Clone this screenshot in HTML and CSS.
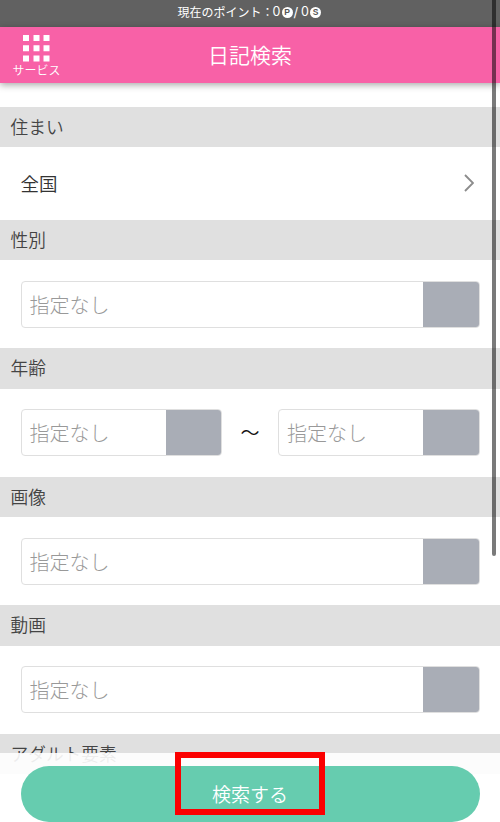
FILE: index.html
```html
<!DOCTYPE html>
<html lang="ja">
<head>
<meta charset="utf-8">
<meta name="viewport" content="width=device-width, initial-scale=1">
<title>日記検索</title>
<link rel="stylesheet" href="styles.css">
</head>
<body>
<div class="screen">
  <div class="points"><span>現在のポイント</span><span class="colon">：</span><span class="num">0</span><span class="coin">P</span><span class="slash">/</span><span class="num">0</span><span class="coin">S</span></div>
  <header class="header">
    <div class="service">
      <svg class="grid-icon" viewBox="0 0 27 27" fill="#fff"><path d="M0 0h6v6H0zM10.5 0h6v6h-6zM20.5 0h6v6h-6zM0 10.3h6v6H0zM10.5 10.3h6v6h-6zM20.5 10.3h6v6h-6zM0 20.6h6v6H0zM10.5 20.6h6v6h-6zM20.5 20.6h6v6h-6z"/></svg>
      <span class="service-label">サービス</span>
    </div>
    <h1 class="title">日記検索</h1>
  </header>
  <main class="form">
    <h2 class="heading">住まい</h2>
    <div class="link-row"><span>全国</span><svg class="chevron" viewBox="0 0 10 18" fill="none" stroke="#8c8c8c" stroke-width="1.9"><path d="M1 1l8 8-8 8"/></svg></div>
    <h2 class="heading">性別</h2>
    <div class="field-row"><div class="select"><span class="value">指定なし</span><span class="handle"></span></div></div>
    <h2 class="heading">年齢</h2>
    <div class="field-row"><div class="select"><span class="value">指定なし</span><span class="handle"></span></div><span class="tilde">〜</span><div class="select"><span class="value">指定なし</span><span class="handle"></span></div></div>
    <h2 class="heading">画像</h2>
    <div class="field-row"><div class="select"><span class="value">指定なし</span><span class="handle"></span></div></div>
    <h2 class="heading">動画</h2>
    <div class="field-row"><div class="select"><span class="value">指定なし</span><span class="handle"></span></div></div>
    <h2 class="heading">アダルト要素</h2>
  </main>
  <footer class="footer">
    <div class="submit">検索する</div>
    <div class="highlight"></div>
  </footer>
  <div class="scrollbar"></div>
</div>
</body>
</html>
```
FILE: styles.css
```css
* { box-sizing: border-box; }
body { margin: 0; font-family: "Noto Sans CJK JP", sans-serif; font-weight: 350; background: #fff; color: #444; }
.screen { position: relative; width: 500px; height: 822px; overflow: hidden; }
.points { height: 27.4px; padding: 0 0 3.4px 177.5px; display: flex; align-items: center; background: #616161; color: #fff; font-size: 12px; line-height: 20px; font-weight: 400; }
.colon { width: 11px; }
.num { width: 8px; font-family: Inter, sans-serif; font-weight: 400; font-size: 12.5px; }
.coin { width: 11px; height: 11px; margin-left: 1px; border-radius: 50%; background: #fff; color: #555; font: 700 8.5px/11px "Liberation Sans", sans-serif; text-align: center; }
.slash { width: 8.5px; padding-right: 2px; font-family: Inter, sans-serif; font-size: 13px; text-align: center; }
.header { position: relative; height: 56px; display: grid; grid-template-columns: 73px 1fr 73px; background: #f861a7; color: #fff; box-shadow: 0 2px 7px rgba(0,0,0,.35); }
.service { display: flex; flex-direction: column; align-items: center; padding-top: 7.6px; }
.grid-icon { width: 27px; height: 27px; margin-right: 1px; }
.service-label { font-size: 12px; line-height: 16px; }
.title { margin: 0; text-align: center; font-size: 21px; line-height: 55px; font-weight: 350; }
.form { padding-top: 23.6px; }
.heading { margin: 0; height: 40.5px; padding-left: 10.5px; background: #e0e0e0; font-size: 17.7px; font-weight: 350; line-height: 38.5px; }
.link-row { height: 72.5px; padding: 0 26px 0 20.5px; display: flex; align-items: center; justify-content: space-between; font-size: 18.5px; color: #333; }
.link-row span { padding-bottom: 2px; }
.chevron { width: 10px; height: 18px; margin-bottom: 2px; }
.field-row { height: 88px; padding: 0 20.5px; display: flex; align-items: center; }
.select { flex: 1; height: 47px; display: flex; justify-content: space-between; border: 1.5px solid #dfdfdf; border-radius: 4px; overflow: hidden; }
.value { padding-left: 8px; font-size: 20px; font-weight: 300; line-height: 45px; color: #999; }
.handle { width: 55.5px; background: #a9adb6; }
.tilde { width: 56px; padding-bottom: 2px; text-align: center; font-size: 19px; color: #111; }
.footer { position: absolute; left: 0; right: 0; bottom: 0; height: 69px; padding: 13px 20.5px 0; background: rgba(255,255,255,.9); }
.submit { height: 56px; border-radius: 28px; background: #66ccaf; color: #fff; text-align: center; font-size: 19px; line-height: 56px; font-weight: 350; }
.highlight { position: absolute; left: 175px; top: -1.5px; width: 150px; height: 63.5px; border: 6px solid #fb0000; }
.scrollbar { position: absolute; left: 492px; top: -8px; width: 4px; height: 563.5px; border-radius: 2px; background: rgba(0,0,0,.52); }
```
